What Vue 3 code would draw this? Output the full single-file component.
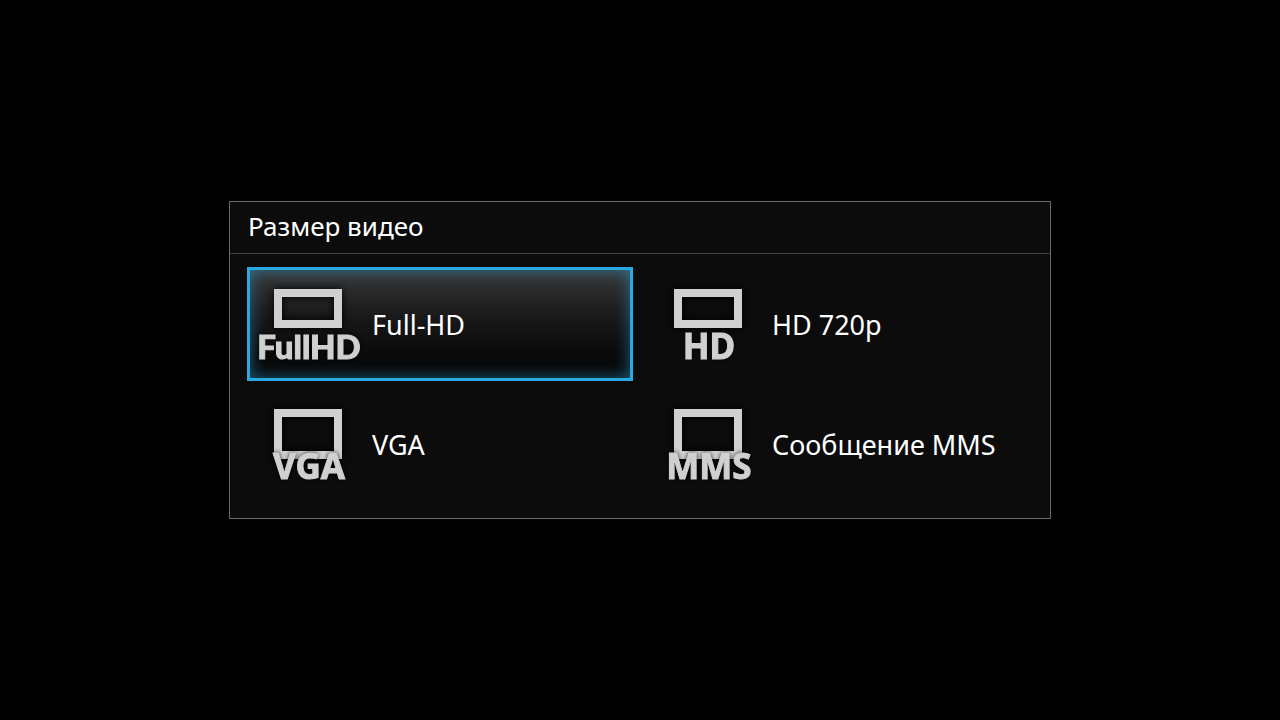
<script setup>
import { ref } from 'vue'

const selected = ref('fullhd')
const sizes = [
  { id: 'fullhd', label: 'Full-HD', mark: 'FullHD', wide: true },
  { id: 'hd', label: 'HD 720p', mark: 'HD', wide: true },
  { id: 'vga', label: 'VGA', mark: 'VGA', wide: false },
  { id: 'mms', label: 'Сообщение MMS', mark: 'MMS', wide: false },
]
</script>

<template>
  <main class="screen">
    <section class="dialog" aria-labelledby="dialog-title">
      <h1 id="dialog-title" class="title">Размер видео</h1>
      <div class="options" role="radiogroup" aria-labelledby="dialog-title">
        <label v-for="size in sizes" :key="size.id" class="option" :class="{ active: selected === size.id }">
          <input v-model="selected" class="radio" type="radio" name="video-size" :value="size.id" />
          <svg class="icon" viewBox="0 0 112 108" aria-hidden="true">
            <rect class="frame" x="26" y="23" width="60" :height="size.wide ? 31 : 42" />
            <text class="mark" :class="{ long: size.mark.length > 3 }" x="57" y="89">{{ size.mark }}</text>
          </svg>
          <span class="label">{{ size.label }}</span>
        </label>
      </div>
    </section>
  </main>
</template>

<style>
body {
  background: #000;
}
</style>

<style scoped>
.screen {
  min-height: 100vh;
  display: flex;
  align-items: center;
  justify-content: center;
  background: #000;
  color: #fff;
  font-family: "Noto Sans", "Open Sans", sans-serif;
}
.dialog {
  box-sizing: border-box;
  width: 100%;
  max-width: 822px;
  border: 1px solid #6b6b6b;
  background: #0c0c0c;
}
.title {
  margin: 0;
  padding: 0 18px 2px;
  border-bottom: 1px solid #404040;
  font-size: 26px;
  font-weight: 400;
  line-height: 49px;
}
.options {
  display: grid;
  grid-template-columns: 1fr 1fr;
  gap: 6px 14px;
  padding: 13px 17px 17px;
}
.option {
  position: relative;
  display: flex;
  align-items: center;
  gap: 8px;
  padding-left: 2px;
  border: 3px solid transparent;
}
.option.active {
  border-color: #29a9e3;
  background: linear-gradient(#373737, #2c2c2c 18%, #181818 45%, #0b0b0b 75%, #060606);
  box-shadow: inset 0 0 16px rgba(41, 169, 227, 0.55);
}
.radio {
  position: absolute;
  inset: 0;
  margin: 0;
  width: 100%;
  height: 100%;
  appearance: none;
  outline: none;
  cursor: pointer;
}
.icon {
  flex: none;
  width: 112px;
  height: 108px;
}
.frame {
  fill: none;
  stroke: #d0d0d0;
  stroke-width: 8px;
  filter: drop-shadow(0 0 4px #000);
}
.mark {
  fill: #d0d0d0;
  stroke: #d0d0d0;
  stroke-width: 1px;
  font-family: "Noto Sans", sans-serif;
  font-size: 35px;
  font-weight: 700;
  text-anchor: middle;
  filter: drop-shadow(0 0 2px rgba(0, 0, 0, 0.8));
}
.mark.long {
  font-family: Lato, sans-serif;
  font-size: 33px;
  font-weight: 900;
}
.label {
  padding-top: 2px;
  font-size: 27px;
  line-height: 36px;
}
</style>
